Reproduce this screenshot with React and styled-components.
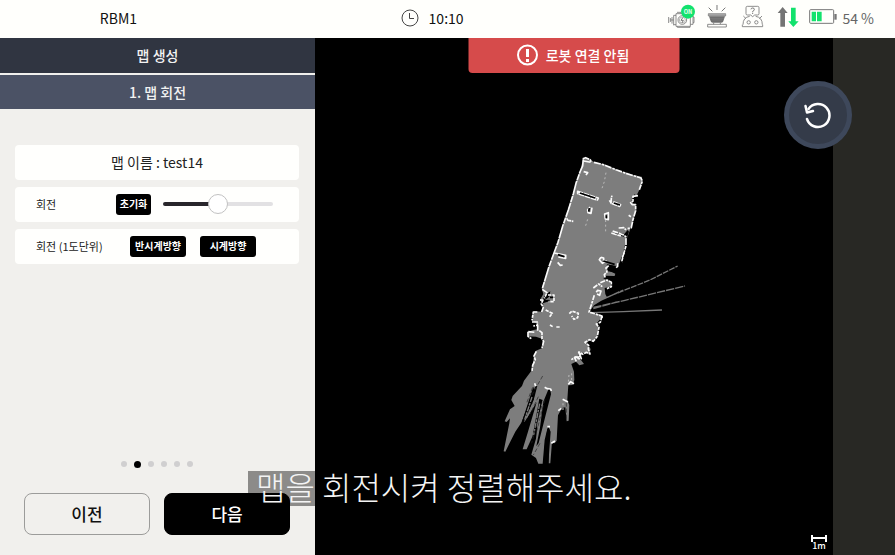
import React, { useState } from "react";
import styled, { createGlobalStyle } from "styled-components";

const GlobalStyle = createGlobalStyle`
  * { box-sizing: border-box; }
  body {
    margin: 0;
    background: #f1f0ed;
    font-family: "Noto Sans CJK KR", "Noto Sans", sans-serif;
    font-size: 14px;
    color: #111;
  }
  button { font-family: inherit; padding: 0; cursor: pointer; }
  h1, h2, p, ol { margin: 0; padding: 0; }
`;

const Page = styled.div`
  position: relative;
  min-height: 100vh;
  display: flex;
  flex-direction: column;
`;

const Header = styled.header`
  display: grid;
  grid-template-columns: 26.5% 44% 1fr;
  align-items: center;
  height: 38px;
  padding: 0 1px 2px 0;
  line-height: 20px;
  background: #fffffc;
`;

const RobotName = styled.div`
  text-align: center;
`;

const Clock = styled.div`
  display: flex;
  align-items: center;
  justify-content: center;
  gap: 10px;
  padding-right: 3px;
`;

const StatusBar = styled.div`
  display: flex;
  align-items: center;
  justify-content: flex-end;
  padding-right: 20px;
  color: #666;
  white-space: nowrap;
`;

const StatusIcon = styled.svg`
  flex: none;
  width: ${(p) => p.$width}px;
  height: 28px;
  margin-right: ${(p) => p.$gap}px;
  overflow: visible;
  fill: none;
  stroke: #777;
  stroke-width: 3;
`;

const Main = styled.main`
  flex: 1;
  display: grid;
  grid-template-columns: 35.2% 1fr;
`;

const Sidebar = styled.section`
  display: flex;
  flex-direction: column;
  background: #f1f0ed;
`;

const PanelTitle = styled.h1`
  height: 35px;
  line-height: 34px;
  text-align: center;
  font-size: 14px;
  font-weight: 500;
  color: #f2f2f2;
  background: #303541;
`;

const StepTitle = styled(PanelTitle).attrs({ as: "h2" })`
  height: 34px;
  margin-top: 2px;
  background: #4b5265;
`;

const Settings = styled.div`
  display: flex;
  flex-direction: column;
  gap: 7px;
  padding: 36px 16px 20px 15px;
`;

const Card = styled.div`
  display: flex;
  align-items: center;
  height: 35px;
  padding: 0 ${(p) => p.$end}px 1px 21px;
  gap: ${(p) => p.$gap}px;
  border-radius: 4px;
  background: #fffffd;
  font-size: 11px;
  color: #222;
`;

const MapName = styled.p`
  flex: 1;
  text-align: center;
  font-size: 14px;
`;

const CardLabel = styled.label`
  flex: 1;
  white-space: nowrap;
`;

const SmallButton = styled.button`
  flex: none;
  width: ${(p) => p.$width}px;
  height: 21px;
  border: 0;
  border-radius: 3px;
  background: #000;
  color: #fff;
  font-size: 10px;
  font-weight: 700;
  line-height: 20px;
  white-space: nowrap;
`;

const Slider = styled.input`
  appearance: none;
  flex: none;
  width: 110px;
  height: 20px;
  margin: 0;
  background: transparent;

  &::-webkit-slider-runnable-track {
    height: 4px;
    border-radius: 2px;
    background: linear-gradient(
      to right,
      #28262b ${(p) => p.$fill}%,
      #e2e1e3 ${(p) => p.$fill}%
    );
  }
  &::-webkit-slider-thumb {
    appearance: none;
    width: 20px;
    height: 20px;
    margin-top: -8px;
    border: 1px solid #c2c2c2;
    border-radius: 50%;
    background: #fff;
  }
`;

const Steps = styled.ol`
  display: flex;
  align-items: center;
  justify-content: center;
  gap: 7px;
  height: 8px;
  margin: auto 2px 0 0;
  list-style: none;
`;

const Step = styled.li`
  width: ${(p) => (p.$active ? 7 : 6)}px;
  height: ${(p) => (p.$active ? 7 : 6)}px;
  border-radius: 50%;
  background: ${(p) => (p.$active ? "#000" : "#d0cfd0")};
`;

const Actions = styled.div`
  display: grid;
  grid-template-columns: 1fr 1fr;
  gap: 14px;
  padding: 25px 25px 20px 24px;
`;

const ActionButton = styled.button`
  height: 42px;
  padding-bottom: 1px;
  border: 1px solid ${(p) => (p.$primary ? "#000" : "#9c9c9a")};
  border-radius: 8px;
  background: ${(p) => (p.$primary ? "#000" : "transparent")};
  color: ${(p) => (p.$primary ? "#fff" : "#111")};
  font-size: 17px;
  font-weight: 500;
`;

const MapArea = styled.section`
  position: relative;
  display: grid;
  grid-template-columns: 1fr 62px;
  background: #282824;
`;

const MapCanvas = styled.div`
  position: relative;
  background: #000;
`;

const MapDrawing = styled.svg`
  position: absolute;
  inset: 0;
  width: 100%;
  height: 100%;
`;

const Alert = styled.div`
  position: absolute;
  top: 0;
  left: 50%;
  transform: translateX(-50%);
  display: flex;
  align-items: center;
  justify-content: center;
  gap: 7px;
  width: 211px;
  height: 35px;
  padding: 0 2px 1px 0;
  border-radius: 0 0 4px 4px;
  background: #d64b4b;
  color: #fff;
  font-weight: 500;
  white-space: nowrap;
`;

const ResetView = styled.button`
  position: absolute;
  top: 43px;
  right: 43px;
  display: grid;
  place-items: center;
  width: 68px;
  height: 68px;
  border: 5px solid #3e485b;
  border-radius: 50%;
  background: #343b49;
`;

const Scale = styled.div`
  position: absolute;
  right: 6px;
  bottom: 6px;
  display: flex;
  flex-direction: column;
  align-items: center;
  color: #fff;
  font-size: 9px;
  font-weight: 500;
  line-height: 7px;
`;

const Caption = styled.p`
  position: absolute;
  left: 248px;
  bottom: 49px;
  height: 35px;
  padding: 0 8px;
  background: rgba(0, 0, 0, 0.42);
  color: #f4f4f4;
  font-size: 32px;
  font-weight: 300;
  line-height: 30px;
  white-space: nowrap;
  pointer-events: none;
`;

function ClockIcon() {
  return (
    <svg width="18" height="18" viewBox="0 0 18 18" fill="none" stroke="#444" aria-hidden="true">
      <circle cx="9" cy="9" r="8" />
      <path d="M8.5 4v5.5H13" />
    </svg>
  );
}

function CameraIcon() {
  return (
    <StatusIcon $width={27} $gap={12} viewBox="39 12 81 84" aria-hidden="true">
      <path d="M41 51v18M46 54v12M51 51v20M46 60h10M56 46v30M63 41h43v38H63zM63 46h-7M63 74h-7M106 47h8v26h-8M114 51h3v17h-3M66 37h12v4M67 79v3h38v-3" strokeWidth="2.5" />
      <circle cx="82" cy="60" r="13" strokeWidth="2.5" />
      <circle cx="82" cy="60" r="9" strokeWidth="1.5" />
      <path d="M84 52l-6 9h7l-4 8" />
      <circle cx="99" cy="35" r="21" fill="#12e26d" stroke="none" />
      <text x="99" y="42" textAnchor="middle" fontSize="17" fontWeight="700" fill="#eafff2" stroke="none">ON</text>
    </StatusIcon>
  );
}

function BowlIcon() {
  return (
    <StatusIcon $width={20} $gap={15} viewBox="155 12 60 84" aria-hidden="true">
      <path d="M185 15v15M160 23l11 11M210 23l-11 11" />
      <path d="M159 41h52v7h-52z" fill="#aaa" strokeWidth="2" />
      <path d="M161 49h48l-5 15q-1 4-6 4h-26q-5 0-6-4z" fill="#6e6e6e" stroke="none" />
      <path d="M164 55h42M170 60h30" stroke="#929292" strokeWidth="1" />
      <path d="M157 73h56v8h-56zM175 68v5M195 68v5" strokeWidth="2.5" />
    </StatusIcon>
  );
}

function RobotIcon() {
  return (
    <StatusIcon $width={21} $gap={15} viewBox="261 12 63 84" aria-hidden="true">
      <path d="M277 19h31q4 0 4 4v18q0 4-4 4h-9l-6 5-6-5h-10q-4 0-4-4V23q0-4 4-4z" strokeWidth="2.5" />
      <path d="M288 28q0-4 5-4t5 4q0 4-5 6v3M293 39v3" />
      <path d="M264 74q0-22 20-25M302 49q20 3 20 25M265 48l8 8M321 48l-8 8" strokeWidth="2.5" />
      <circle cx="281" cy="67" r="5" strokeWidth="2.5" />
      <circle cx="304" cy="67" r="5" strokeWidth="2.5" />
      <path d="M262 80v-6M323 80v-6M262 80h61" strokeWidth="2.5" />
    </StatusIcon>
  );
}

function TransferIcon() {
  return (
    <StatusIcon $width={21} $gap={10} viewBox="369 12 63 84" aria-hidden="true">
      <path d="M383 21l15 18h-8v41h-14V39h-8z" fill="#747474" stroke="none" />
      <path d="M415 81l-15-17h8V23h14v41h9z" fill="#12e26d" stroke="none" />
    </StatusIcon>
  );
}

function BatteryIcon() {
  return (
    <StatusIcon $width={28} $gap={5} viewBox="462 12 84 84" aria-hidden="true">
      <rect x="464" y="29" width="72" height="41" rx="3" />
      <path d="M538 42h7v17h-7z" fill="#777" stroke="none" />
      <path d="M470 35h13v29h-13zM486 35h14v29h-14z" fill="#12e26d" stroke="none" />
    </StatusIcon>
  );
}

function AlertIcon() {
  return (
    <svg width="22" height="22" viewBox="0 0 22 22" fill="none" stroke="#fff" aria-hidden="true">
      <circle cx="11" cy="11" r="9.5" strokeWidth="2" />
      <path d="M11 5v8M11 15v3" strokeWidth="3" />
    </svg>
  );
}

function RotateIcon() {
  return (
    <svg width="28" height="28" viewBox="0 0 28 28" fill="none" stroke="#fff" strokeWidth="2.5" strokeLinecap="round" strokeLinejoin="round" aria-hidden="true">
      <path d="M3 18A11.500 11.500 0 1 0 4.500 8" />
      <path d="M1.500 5L3 11.500 9 10" />
    </svg>
  );
}

function FloorMap() {
  return (
    <MapDrawing viewBox="-525 -336 1554 1551" role="img" aria-label="test14">
      <g fill="#7d7d7d">
        <path d="M280 24L300 28 312 36 340 43 380 60 415 72 455 80 458 92 448 120 440 136 430 138 424 156 437 167 436 185 428 215 420 240 412 262 408 270 404 290 398 312 388 340 380 348 355 344 352 360 376 371 374 378 347 377 340 385 360 396 364 410 344 414 346 432 352 444 334 452 312 466 298 486 334 495 336 502 318 522 328 532 322 558 308 575 300 570 290 580 302 597 298 612 276 608 264 618 282 642 268 646 258 635 244 642 252 665 253 690 248 705 235 706 232 750 238 765 236 812 230 814 226 772 216 774 204 796 200 872 194 880 186 876 181 940 176 940 178 836 172 836 164 870 158 941 145 941 138 924 124 914 138 866 148 780 158 750 148 746 128 858 110 898 98 898 114 845 140 757 104 815 98 813 134 726 130 710 96 815 76 845 46 905 41 904 58 820 60 805 50 816 44 814 60 778 74 768 64 750 68 738 96 708 102 692 126 660 131 625 138 602 157 594 158 567 138 560 115 559 114 545 130 540 143 538 143 520 126 514 131 484 155 485 160 463 150 450 160 432 155 415 165 388 190 313 205 272 220 228 248 133 260 96 273 52z" />
        <path d="M390 238l26 5-3 15-18-4z" />
      </g>
      <g stroke="#777" strokeWidth="4" fill="none">
        <path d="M345 444L480 390 563 348M352 442L400 420" strokeDasharray="18 3" />
        <path d="M310 472L405 451 585 408M310 476L380 456" strokeDasharray="25 3" />
        <path d="M303 488L400 485 516 480" />
      </g>
      <g fill="#000">
        <path d="M432 133l16 8-4 12-18-3 7-6zM413 240l4 5-6 18-37-12 4-4 25 5zM351 343l32 7-13 16-18-2 8-9-10-4zM181 424l-18 13-9 24 26-8-2-4-13 1 13-10z" />
        <path d="M136 709l-42 109 8-3 28-60 12-48zM176 716l-16 39-10 78-11 56 7-10 22-88 15-58-2-18zM152 758l-25 105 12-35 18-71zM174 828l-9 52-5 61 15 0 7-96z" />
      </g>
      <g stroke="#7d7d7d" strokeWidth="4" strokeDasharray="16 3 8 2">
        <path d="M140 735l-30 68M149 761l-18 94M158 758l-17 75M126 741l-22 68" />
      </g>
      <g stroke="#252525" strokeWidth="2" strokeDasharray="12 6">
        <path d="M158 678l-34 60M145 740l-24 52M165 748l-25 96M155 768l-30 112M150 880l-20 35M229 758v52M128 712l-18 47" />
      </g>
      <g stroke="#fafafa" fill="none" strokeWidth="5" strokeLinejoin="round">
        <path d="M280 28l-2 20-8 18-12 34-8 32-15 48-17 49-14 48-15 40-12 33-11 36-9 30" strokeDasharray="45 2 19 2" />
        <path d="M278 26l9-3 14 6 2 8-22-4M312 37l28 7 38 15 30 11 45 14 4 10-9 25" strokeDasharray="21 3 8 2" />
        <path d="M444 137l-15 2v14l-7 5 5 6h10v18l-8 27-5 24-11 3M408 265v23l-7 23-6 25M403 308l-6 14" strokeDasharray="20 3 11 2" />
        <path d="M383 340v9l-5 4M356 347l-8 7 3 12-8 8 3 10M331 398l20-8 13 7v13l-13 6M310 414l16-12 11 8M313 436l-8 26-8 24 39 12v8" strokeDasharray="15 3 8 2" />
        <path d="M336 498l-5 19-12 5 8 10-5 27-12 15-12-5-13 8 11 9-1 11 5 15-11-5-10 6-12-7 7 20-9 0-3-8-18 11" strokeDasharray="13 3 9 3" />
        <path d="M157 418l14 10-8 17M150 450l9 0-5 12 6 10-5 14M142 486h-12l-4 25M126 516h16v10l-12 2M114 545v14l10 7M115 545l20 2M148 542l8 6v18l5 8-5 20M139 604l-7 14 4 11-8 17-2 18M143 526v16" strokeDasharray="18 2 10 3" />
        <path d="M174 435h18v20h-16M167 480l20 10-8 10M238 491l8-8 19 7-2 13-11 5-7-10M180 525l8 5M199 531h10" strokeDasharray="10 3" />
        <path d="M263 124l62 20-3 6-59-19zM358 151l6 9M370 155l22 9-3 5-26-9 1-15 2-8M386 234l16-1 6 7M368 243l31 11 10 7M364 249l29 9M230 205l4 6 16 3" strokeDasharray="17 2" />
        <path d="M300 171l-7 9 1 8 9 2 3-17M344 192l2 15 9 2V188zM333 322l-5 7 9 11 13-8M333 322l8 2v9M193 309l34 7v9l-22-4M416 196l7 4" />
        <path d="M281 65l12 3-5 7M203 337l8 9 7-1M218 748l16 8M205 782l9-7M164 712l8 4 10 1 2 6M134 700l3 9M235 703l7-8 10 6M172 830h8M184 880l11-7" />
        <path d="M319 427l4-6 10 2-4 13-8-4M265 606l7 8-7 9-12-2M253 621l6 13" />
      </g>
      <g stroke="#bbb" fill="none" strokeWidth="3" strokeDasharray="6 8">
        <path d="M348 68l-5 27-8 23M293 208l-7 22M347 210v38M237 675l-2 22M245 670v28M219 760v24" />
      </g>
      <path d="M270 129l45 15M372 159l18 6M298 174l-2 11M349 196v9M204 314l19 6M180 442h9M340 333l34 10" stroke="#000" strokeWidth="5" />
    </MapDrawing>
  );
}

function ScaleBar() {
  return (
    <svg width="16" height="7" viewBox="0 0 16 7" stroke="#fff" strokeWidth="2" aria-hidden="true">
      <path d="M1 0v7M15 0v7M1 3h14" />
    </svg>
  );
}

export default function App() {
  const [angle, setAngle] = useState(0);
  const turn = (by) => setAngle((a) => Math.max(-180, Math.min(180, a + by)));

  return (
    <>
      <GlobalStyle />
      <Page>
        <Header>
          <RobotName>RBM1</RobotName>
          <Clock>
            <ClockIcon />
            <time>10:10</time>
          </Clock>
          <StatusBar>
            <CameraIcon />
            <BowlIcon />
            <RobotIcon />
            <TransferIcon />
            <BatteryIcon />
            <span>54 %</span>
          </StatusBar>
        </Header>
        <Main>
          <Sidebar>
            <PanelTitle>맵 생성</PanelTitle>
            <StepTitle>1. 맵 회전</StepTitle>
            <Settings>
              <Card $end={21} $gap={0}>
                <MapName>맵 이름 : test14</MapName>
              </Card>
              <Card $end={26} $gap={12}>
                <CardLabel htmlFor="rotation">회전</CardLabel>
                <SmallButton type="button" $width={35} onClick={() => setAngle(0)}>초기화</SmallButton>
                <Slider
                  id="rotation"
                  type="range"
                  min="-180"
                  max="180"
                  value={angle}
                  $fill={Math.round((angle + 180) / 3.6)}
                  onChange={(e) => setAngle(Number(e.target.value))}
                />
              </Card>
              <Card $end={43} $gap={14} role="group" aria-labelledby="rotation-step">
                <CardLabel as="span" id="rotation-step">회전 (1도단위)</CardLabel>
                <SmallButton type="button" $width={56} onClick={() => turn(-1)}>반시계방향</SmallButton>
                <SmallButton type="button" $width={56} onClick={() => turn(1)}>시계방향</SmallButton>
              </Card>
            </Settings>
            <Steps>
              {[0, 1, 2, 3, 4, 5].map((i) => (
                <Step key={i} $active={i === 1} />
              ))}
            </Steps>
            <Actions>
              <ActionButton type="button">이전</ActionButton>
              <ActionButton type="button" $primary>다음</ActionButton>
            </Actions>
          </Sidebar>
          <MapArea>
            <MapCanvas>
              <FloorMap />
              <Alert role="alert">
                <AlertIcon />
                로봇 연결 안됨
              </Alert>
              <Scale>
                <ScaleBar />
                1m
              </Scale>
            </MapCanvas>
            <ResetView type="button" aria-label="회전 초기화" onClick={() => setAngle(0)}>
              <RotateIcon />
            </ResetView>
          </MapArea>
        </Main>
        <Caption>맵을 회전시켜 정렬해주세요.</Caption>
      </Page>
    </>
  );
}
